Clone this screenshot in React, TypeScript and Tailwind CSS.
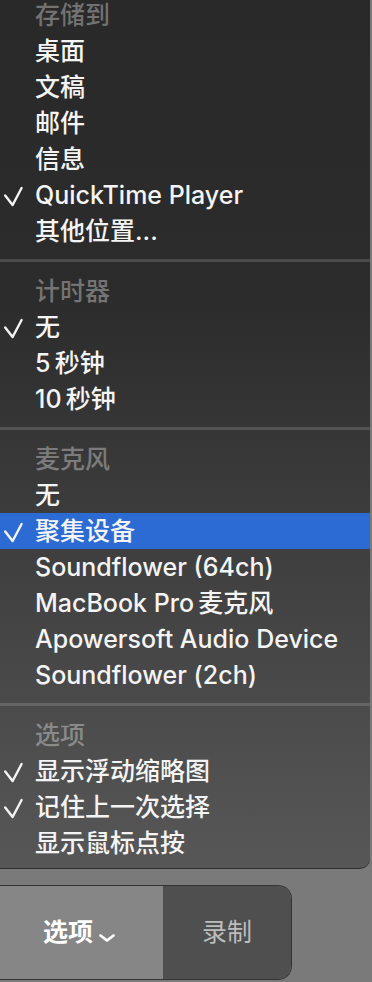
import React from "react";

type Item = { label: string; header?: boolean; checked?: boolean; active?: boolean };

const sections: Item[][] = [
  [
    { label: "存储到", header: true },
    { label: "桌面" },
    { label: "文稿" },
    { label: "邮件" },
    { label: "信息" },
    { label: "QuickTime Player", checked: true },
    { label: "其他位置..." },
  ],
  [
    { label: "计时器", header: true },
    { label: "无", checked: true },
    { label: "5\u2009秒钟" },
    { label: "10\u2009秒钟" },
  ],
  [
    { label: "麦克风", header: true },
    { label: "无" },
    { label: "聚集设备", checked: true, active: true },
    { label: "Soundflower (64ch)" },
    { label: "MacBook Pro\u2009麦克风" },
    { label: "Apowersoft Audio Device" },
    { label: "Soundflower (2ch)" },
  ],
  [
    { label: "选项", header: true },
    { label: "显示浮动缩略图", checked: true },
    { label: "记住上一次选择", checked: true },
    { label: "显示鼠标点按" },
  ],
];

const Check = () => (
  <svg
    width="22"
    height="22"
    viewBox="0 0 22 22"
    className="absolute left-[2px] top-[8px] overflow-visible"
    fill="none"
  >
    <path
      d="M3.2 10.4 L10.6 20 L19.6 3"
      stroke="#f4f4f4"
      strokeWidth="2.4"
      strokeLinecap="round"
      strokeLinejoin="round"
    />
  </svg>
);

const Row = ({ item }: { item: Item }) => (
  <div
    className={
      "relative flex h-[36px] items-center pl-[35px] " +
      (item.active ? "bg-[#2c6bd3] " : "") +
      (item.header ? "text-white/35" : "text-[#f4f4f4]")
    }
  >
    {item.checked && <Check />}
    <span className="whitespace-pre">{item.label}</span>
  </div>
);

export default function App() {
  return (
    <div
      className="h-[982px] w-[372px] overflow-hidden bg-[#7a7a7a] text-[25px] font-medium leading-none"
      style={{ fontFamily: 'Inter, "Noto Sans CJK SC", sans-serif' }}
    >
      <div className="-mt-[3px] w-[370px] overflow-hidden rounded-br-[10px] border-b border-[#2f2f2f] bg-[linear-gradient(180deg,#292929_0%,#2c2c2c_35%,#575757_100%)] pb-[7px]">
        {sections.map((sec, i) => (
          <div key={i}>
            {i > 0 && (
              <div className="pb-[11px] pt-[10px]">
                <div className="h-[3px] bg-white/15" />
              </div>
            )}
            {sec.map((item, j) => (
              <Row key={j} item={item} />
            ))}
          </div>
        ))}
      </div>
      <div className="mt-[16px] flex h-[95px] w-[292px] overflow-hidden rounded-r-[14px] border-y border-r border-[#343434]">
        <div className="flex w-[163px] items-center justify-center bg-[#868686] pr-[4px] text-white">
          <span className="font-bold">选项</span>
          <svg width="18" height="10" viewBox="0 0 18 10" className="ml-[5px] mt-[10px]" fill="none">
            <path d="M2.5 2.5 L9 7.5 L15.5 2.5" stroke="#ffffff" strokeWidth="2.8" strokeLinecap="round" strokeLinejoin="round" />
          </svg>
        </div>
        <div className="flex flex-1 items-center justify-center bg-[#4f4f4f] text-[#bdbdbd]">
          <span className="font-normal">录制</span>
        </div>
      </div>
    </div>
  );
}
